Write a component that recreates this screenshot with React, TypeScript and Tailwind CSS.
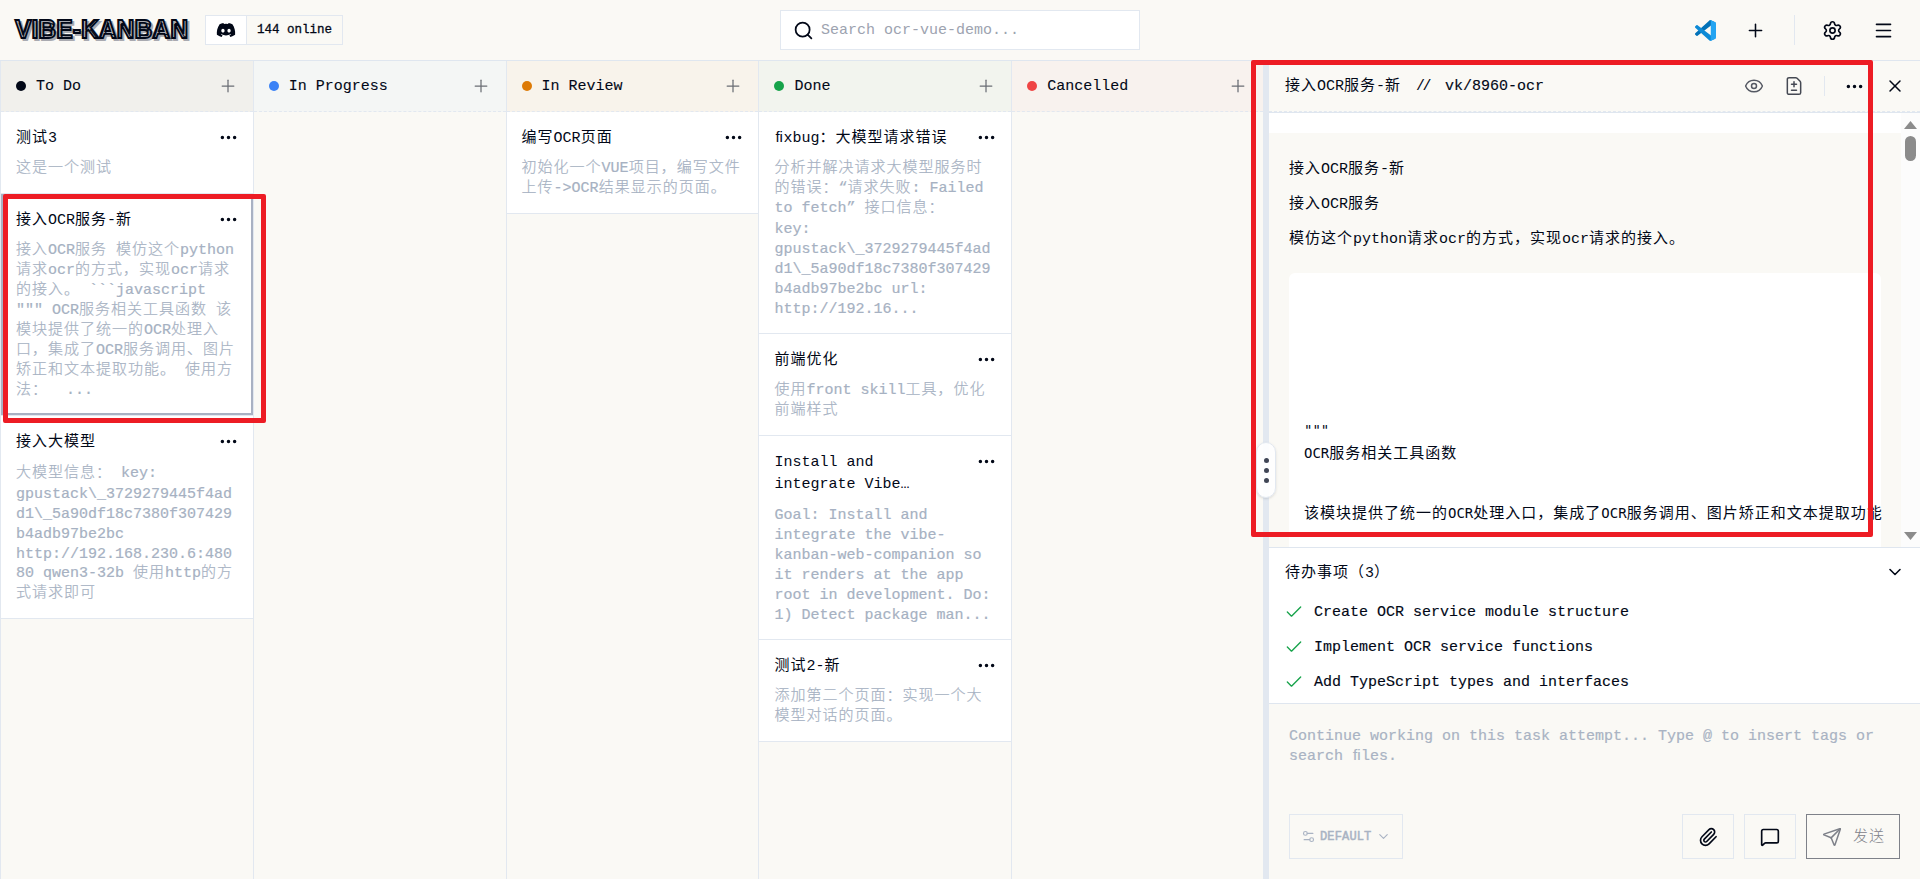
import React from "react";
import {
  Check,
  ChevronDown,
  Ellipsis,
  Eye,
  FileDiff,
  Menu,
  MessageSquare,
  Paperclip,
  Plus,
  Search,
  Send,
  Settings,
  Settings2,
  X,
} from "lucide-react";
import { FaDiscord } from "react-icons/fa";

const CJK = /([\u3000-\u9fff\uff00-\uffef]+)/;

/** Text in which full-width runs sit on a 16px pitch next to the Latin monospace cells. */
function Mixed({ text, light }: { text: string; light?: boolean }) {
  return (
    <>
      {text.split(CJK).map((part, i) =>
        CJK.test(part) ? (
          <span key={i} className={`tracking-[1px] ${light ? "font-light" : "font-normal"}`}>
            {part}
          </span>
        ) : (
          <React.Fragment key={i}>
            {part.split(/(fi)/).map((p, j) =>
              p === "fi" ? (
                <span
                  key={j}
                  className="inline-block w-[9px] pl-px font-['Liberation_Sans'] leading-none tracking-normal"
                >
                  fi
                </span>
              ) : (
                p
              )
            )}
          </React.Fragment>
        )
      )}
    </>
  );
}

type CardData = { title: string[]; lines: string[]; selected?: boolean; loose?: boolean };
type ColumnData = { name: string; head: string; dot: string; cards: CardData[] };

const columns: ColumnData[] = [
  {
    name: "To Do",
    head: "bg-[#f1f0ec]",
    dot: "bg-[#020817]",
    cards: [
      { title: ["测试3"], lines: ["这是一个测试"] },
      {
        title: ["接入OCR服务-新"],
        selected: true,
        lines: [
          "接入OCR服务 模仿这个python",
          "请求ocr的方式，实现ocr请求",
          "的接入。 ```javascript",
          '""" OCR服务相关工具函数 该',
          "模块提供了统一的OCR处理入",
          "口，集成了OCR服务调用、图片",
          "矫正和文本提取功能。 使用方",
          "法：  ...",
        ],
      },
      {
        title: ["接入大模型"],
        loose: true,
        lines: [
          "大模型信息： key:",
          "gpustack\\_3729279445f4ad",
          "d1\\_5a90df18c7380f307429",
          "b4adb97be2bc",
          "http://192.168.230.6:480",
          "80 qwen3-32b 使用http的方",
          "式请求即可",
        ],
      },
    ],
  },
  { name: "In Progress", head: "bg-[#f4f6f5]", dot: "bg-[#3b82f6]", cards: [] },
  {
    name: "In Review",
    head: "bg-[#f8f3eb]",
    dot: "bg-[#dd7a06]",
    cards: [
      {
        title: ["编写OCR页面"],
        lines: ["初始化一个VUE项目，编写文件", "上传->OCR结果显示的页面。"],
      },
    ],
  },
  {
    name: "Done",
    head: "bg-[#f2f4ee]",
    dot: "bg-[#16a34a]",
    cards: [
      {
        title: ["fixbug：大模型请求错误"],
        lines: [
          "分析并解决请求大模型服务时",
          "的错误：“请求失败: Failed",
          "to fetch” 接口信息：",
          "key:",
          "gpustack\\_3729279445f4ad",
          "d1\\_5a90df18c7380f307429",
          "b4adb97be2bc url:",
          "http://192.16...",
        ],
      },
      { title: ["前端优化"], lines: ["使用front skill工具，优化", "前端样式"] },
      {
        title: ["Install and", "integrate Vibe…"],
        lines: [
          "Goal: Install and",
          "integrate the vibe-",
          "kanban-web-companion so",
          "it renders at the app",
          "root in development. Do:",
          "1) Detect package man...",
        ],
      },
      { title: ["测试2-新"], lines: ["添加第二个页面：实现一个大", "模型对话的页面。"] },
    ],
  },
  { name: "Cancelled", head: "bg-[#f8f2ee]", dot: "bg-[#ef4444]", cards: [] },
];

function Card({ card }: { card: CardData }) {
  return (
    <div
      className={`border-b border-[#e2e8f0] bg-white pt-[14px] pr-[14px] pb-[14px] pl-[15px] ${
        card.selected ? "ring-2 ring-[#a9b1c3] ring-inset" : ""
      }`}
    >
      <div className="flex items-start justify-between">
        <div className="pt-[2px] leading-[22px] whitespace-pre text-[#020817]">
          {card.title.map((t) => (
            <div key={t} className="h-[22px]">
              <Mixed text={t} />
            </div>
          ))}
        </div>
        <Ellipsis size={21} className="mt-px shrink-0 text-[#020817]" />
      </div>
      <div
        className={`leading-5 whitespace-pre text-[#a6b1c2] [-webkit-text-stroke:0.2px] ${
          card.loose ? "mt-[10px]" : "mt-[9px]"
        }`}
      >
        {card.lines.map((l, i) => (
          <div key={i} className={CJK.test(l) ? "h-5" : "h-5 pt-px"}>
            <Mixed text={l} light />
          </div>
        ))}
      </div>
    </div>
  );
}

function Column({ column }: { column: ColumnData }) {
  return (
    <section className="flex w-[252.8px] shrink-0 flex-col border-r border-[#e2e8f0] last:w-auto last:min-w-0 last:flex-1 last:border-r-0">
      <header
        className={`flex h-[51px] shrink-0 items-center border-b border-dashed border-[#e2e8f0] pr-[15px] pl-[15px] ${column.head}`}
      >
        <span className={`size-[10px] rounded-full ${column.dot}`} />
        <span className="ml-[10px] flex-1 pt-[2px] whitespace-pre text-[#020817] [-webkit-text-stroke:0.1px]">
          {column.name}
        </span>
        <Plus size={20} strokeWidth={1.5} className="text-[#6a6d74]" />
      </header>
      {column.cards.map((c, i) => (
        <Card key={i} card={c} />
      ))}
    </section>
  );
}

function VSCodeLogo() {
  return (
    <svg width="21" height="21" viewBox="0 0 100 100">
      <path
        d="M96.5 10.8 75.9.9c-2.4-1.2-5.2-.7-7.1 1.2L1.3 63.6c-1.8 1.7-1.8 4.5 0 6.2l5.5 5c1.5 1.3 3.7 1.4 5.3.2l81.2-61.6c2.7-2.1 6.7-.1 6.7 3.3v-.3c0-2.4-1.4-4.6-3.5-5.6z"
        fill="#0272b8"
      />
      <path
        d="m96.5 89.2-20.6 9.9c-2.4 1.2-5.2.7-7.1-1.2L1.3 36.4c-1.8-1.7-1.8-4.5 0-6.2l5.5-5c1.5-1.3 3.7-1.4 5.3-.2l81.2 61.6c2.7 2.1 6.7.1 6.7-3.3v.3c0 2.4-1.4 4.6-3.5 5.6z"
        fill="#0d8ad6"
      />
      <path
        d="M75.9 99.1c-2.4 1.2-5.2.7-7.1-1.2 2.3 2.3 6.3.7 6.3-2.6V4.7c0-3.3-4-4.9-6.3-2.6 1.9-1.9 4.7-2.4 7.1-1.2l20.6 9.9c2.2 1 3.5 3.2 3.5 5.6v67.1c0 2.4-1.4 4.6-3.5 5.6z"
        fill="#23a4f2"
      />
    </svg>
  );
}

function TopBar() {
  return (
    <div className="flex h-[61px] shrink-0 items-center border-b border-[#dfe6ef]">
      <svg width="176" height="32" className="ml-[14px] shrink-0 overflow-visible">
        <text
          x="1"
          y="24"
          textLength="173"
          lengthAdjust="spacingAndGlyphs"
          className="fill-[#020817] stroke-[#020817] font-['Liberation_Sans'] text-[25px] font-bold [stroke-linejoin:miter] [stroke-width:1.8px] [text-shadow:2px_2px_0_#a9aab0]"
        >
          VIBE-KANBAN
        </text>
      </svg>
      <div className="ml-[15px] flex h-[30px] w-[138px] border border-[#e2e8f0] text-[12.5px]">
        <div className="flex w-[41px] items-center justify-center border-r border-[#e2e8f0] bg-white">
          <FaDiscord size={20} className="text-[#020817]" />
        </div>
        <span className="pl-[10px] leading-[29px] whitespace-pre [-webkit-text-stroke:0.3px]">
          144 online
        </span>
      </div>
      <div className="ml-[437px] flex h-10 w-[360px] items-center border border-[#e2e8f0] bg-white pl-3">
        <Search size={21} className="text-[#020817]" />
        <span className="ml-[7px] pt-[2px] whitespace-pre text-[#9da3b0]">
          Search ocr-vue-demo...
        </span>
      </div>
      <div className="ml-auto flex items-center pr-[26px] text-[#020817]">
        <VSCodeLogo />
        <Plus size={21} strokeWidth={1.75} className="ml-[29px]" />
        <span className="ml-7 h-[30px] w-px bg-[#e2e8f0]" />
        <Settings size={21} strokeWidth={1.9} className="ml-[27px]" />
        <Menu size={21} strokeWidth={1.9} className="ml-[30px]" />
      </div>
    </div>
  );
}

const todos = [
  "Create OCR service module structure",
  "Implement OCR service functions",
  "Add TypeScript types and interfaces",
];

function AttemptPanel() {
  return (
    <aside className="flex w-[651px] shrink-0 flex-col text-[#020817]">
      <header className="flex h-[51px] shrink-0 items-center border-b border-dashed border-[#e2e8f0] pr-[15px] pl-4 whitespace-pre">
        <span className="pt-[3px]">
          <Mixed text="接入OCR服务-新" />
        </span>
        <span className="ml-[15px] pt-[2px] tracking-[-2.5px]">//</span>
        <span className="ml-[16px] pt-[2px] [-webkit-text-stroke:0.15px]">vk/8960-ocr</span>
        <div className="ml-auto flex items-center">
          <Eye size={20} strokeWidth={1.8} className="text-[#555963]" />
          <FileDiff size={20} strokeWidth={1.8} className="ml-5 text-[#454953]" />
          <span className="ml-[20px] h-5 w-px bg-[#e2e8f0]" />
          <Ellipsis size={21} className="ml-[19px]" />
          <X size={20} strokeWidth={1.8} className="ml-[20px]" />
        </div>
      </header>

      <div className="flex h-[435px] shrink-0 border-t border-[#dfe6ef]">
        <div className="flex w-[632px] flex-col overflow-hidden">
          <div className="h-5 shrink-0 bg-white" />
          <div className="flex-1 pt-[27px] pr-5 pl-5">
            <p className="mb-[15px] h-5 leading-5 whitespace-pre">
              <Mixed text="接入OCR服务-新" />
            </p>
            <p className="mb-[15px] h-5 leading-5 whitespace-pre">
              <Mixed text="接入OCR服务" />
            </p>
            <p className="h-5 leading-5 whitespace-pre">
              <Mixed text="模仿这个python请求ocr的方式，实现ocr请求的接入。" />
            </p>
            <div className="mt-[23px] h-[280px] rounded-t-md bg-white pt-[147px] pl-[15px] font-['DejaVu_Sans_Mono','Noto_Sans_CJK_SC',monospace] text-[14px] leading-5 whitespace-pre">
              <div className="mb-[3px] h-5">"""</div>
              <div className="h-5 [&>span]:text-[15px]">
                <Mixed text="OCR服务相关工具函数" />
              </div>
              <div className="h-10" />
              <div className="h-5 [&>span]:text-[15px]">
                <Mixed text="该模块提供了统一的OCR处理入口，集成了OCR服务调用、图片矫正和文本提取功能" />
              </div>
            </div>
          </div>
        </div>
        <div className="flex flex-1 flex-col items-center bg-[#fcfcfc] pt-[7px] pb-[7px]">
          <svg width="13" height="8" viewBox="0 0 13 8" className="mt-px">
            <path d="M6.5 0 13 8H0z" fill="#8b8b8b" />
          </svg>
          <span className="mt-[7px] h-[25px] w-[11px] rounded-full bg-[#8b8b8b]" />
          <svg width="13" height="8" viewBox="0 0 13 8" className="mt-auto">
            <path d="M0 0h13L6.5 8z" fill="#8b8b8b" />
          </svg>
        </div>
      </div>

      <div className="flex h-[157px] shrink-0 flex-col border-y border-[#dfe6ef] bg-white pl-4">
        <div className="flex h-[47px] shrink-0 items-center justify-between pt-px pr-[15px]">
          <span className="pt-[4px] whitespace-pre">
            <Mixed text="待办事项（3）" />
          </span>
          <ChevronDown size={20} strokeWidth={1.9} />
        </div>
        {todos.map((t) => (
          <div key={t} className="flex h-[35px] items-center">
            <Check size={20} strokeWidth={1.6} className="mb-[2px] ml-[-1px] text-[#16a34a]" />
            <span className="ml-[10px] pt-px whitespace-pre [-webkit-text-stroke:0.15px]">
              <Mixed text={t} />
            </span>
          </div>
        ))}
      </div>

      <div className="flex flex-1 flex-col justify-between pt-[23px] pr-5 pb-5 pl-5">
        <div className="leading-5 whitespace-pre text-[#a9b3c3] [-webkit-text-stroke:0.2px]">
          <div className="h-5">
            Continue working on this task attempt... Type @ to insert tags or
          </div>
          <div className="h-5">
            <Mixed text="search files." />
          </div>
        </div>
        <div className="flex h-[45px]">
          <button className="flex w-[114px] items-center border border-[#e2e8f0] pl-[11px] text-[12px] text-[#a9b3c3] [-webkit-text-stroke:0.5px]">
            <Settings2 size={15} strokeWidth={1.8} />
            <span className="ml-[4px] pt-px tracking-[0.15px]">DEFAULT</span>
            <ChevronDown size={15} strokeWidth={1.8} className="ml-[5px]" />
          </button>
          <button className="ml-auto flex w-[52px] items-center justify-center border border-[#e2e8f0]">
            <Paperclip size={20} />
          </button>
          <button className="ml-[10px] flex w-[52px] items-center justify-center border border-[#e2e8f0]">
            <MessageSquare size={20} />
          </button>
          <button className="ml-[10px] flex w-[94px] items-center border border-[#7e8189] pl-[15px] text-[#7e8189]">
            <Send size={20} strokeWidth={1.8} />
            <span className="ml-[11px] pt-[4px]">
              <Mixed text="发送" light />
            </span>
          </button>
        </div>
      </div>
    </aside>
  );
}

export default function App() {
  return (
    <div className="relative flex h-[879px] w-[1920px] flex-col overflow-hidden bg-[#faf9f5] font-['Liberation_Mono','Noto_Sans_CJK_SC',monospace] text-[15px] text-[#020817]">
      <TopBar />
      <div className="flex min-h-0 flex-1">
        <div className="flex w-[1263px] shrink-0 border-l border-[#e2e8f0]">
          {columns.map((c) => (
            <Column key={c.name} column={c} />
          ))}
        </div>
        <div className="w-[6px] shrink-0 bg-[#e2e8f0]" />
        <AttemptPanel />
      </div>

      <div className="absolute top-[442px] left-[1256px] flex h-[56px] w-[20px] flex-col items-center justify-center gap-[5px] rounded-full border border-[#e2e8f0] bg-white/90 shadow-sm">
        <span className="size-[5px] rounded-full bg-[#3f4555]" />
        <span className="size-[5px] rounded-full bg-[#3f4555]" />
        <span className="size-[5px] rounded-full bg-[#3f4555]" />
      </div>
      <div className="absolute top-[194px] left-[3px] h-[229px] w-[263px] rounded-[2px] border-[5px] border-[#ed1c24]" />
      <div className="absolute top-[60px] left-[1251px] h-[477px] w-[622px] rounded-[2px] border-[5px] border-[#ed1c24]" />
    </div>
  );
}
